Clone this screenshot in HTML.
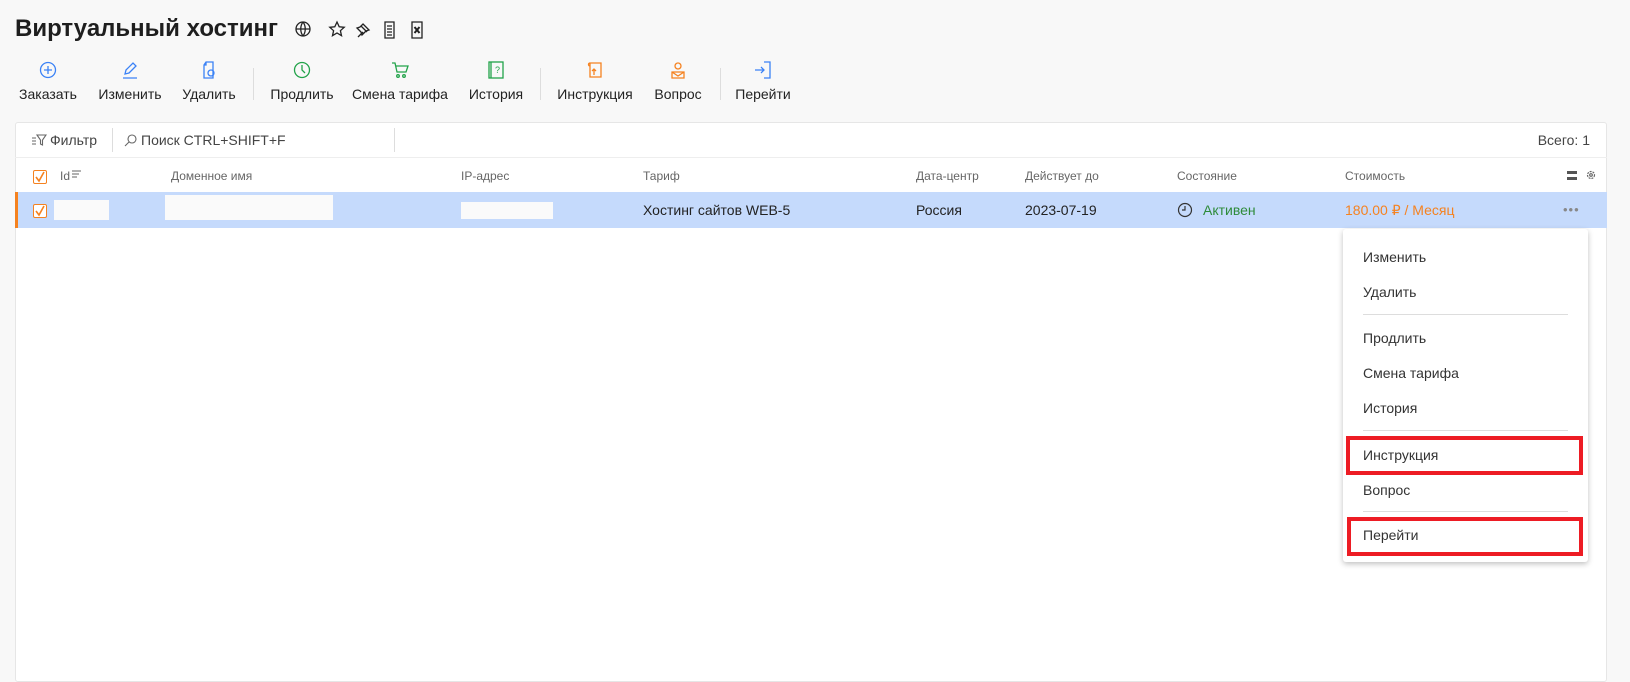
<!DOCTYPE html>
<html><head><meta charset="utf-8"><style>
*{margin:0;padding:0;box-sizing:border-box}
body{width:1630px;height:644px;background:#f8f8f8;font-family:"Liberation Sans",sans-serif;color:#222;position:relative;overflow:hidden}
.a{position:absolute;white-space:nowrap}
.t{font-size:24px;font-weight:bold;left:15px;top:15px;color:#1e1e1e}
.lbl{font-size:14px;top:86px;transform:translateX(-50%);color:#222}
.ic{top:61px;transform:translateX(-50%)}
.sep{width:1px;height:32px;background:#ddd;top:68px}
.panel{left:15px;top:122px;width:1592px;height:560px;background:#fff;border:1px solid #e6e6e6;border-radius:3px}
.hd{font-size:12px;color:#666;top:169px}
.row{left:15px;top:192px;width:1592px;height:36px;background:#c5dafc;border-left:3px solid #f58220}
.cb{width:14px;height:14px;border:1.5px solid #f58220;border-radius:2px;background:#fff}
.wb{background:#fafafa}
.d{font-size:14px;top:202px;color:#222}
.menu{left:1343px;top:229px;width:245px;height:333px;background:#fff;border-radius:3px;box-shadow:0 2px 6px rgba(0,0,0,.25)}
.mi{font-size:14px;left:1363px;color:#333}
.ms{left:1363px;width:205px;height:1px;background:#ddd}
.red{border:4px solid #ed1c24}
</style></head><body>
<div class="a t">Виртуальный хостинг</div>
<svg class="a" style="left:295px;top:20px" width="140" height="20" viewBox="0 0 140 20" fill="none" stroke="#222" stroke-width="1.3">
<circle cx="8" cy="9" r="7"/><path d="M1 9h14M8 2c-3 4-3 10 0 14M8 2c3 4 3 10 0 14"/>
<path d="M42 2l2.2 4.8 5 .5-3.8 3.4 1.1 5-4.5-2.7-4.5 2.7 1.1-5-3.8-3.4 5-.5z"/>
<path d="M63 17l5-5M66 6l6 6M68 4l6 6-3 1-4 4-1-3-4-4 3-1z"/>
<path d="M90 2h9v16h-9zM92 6h5M92 9h5M92 12h5M92 15h5"/>
<path d="M117 2h10v16h-10z"/><path d="M119.5 7l5 6M124.5 7l-5 6" stroke-width="2"/>
</svg>
<svg class="a ic" style="left:48px" width="18" height="18" fill="none" stroke="#3b82f6" stroke-width="1.3"><circle cx="9" cy="9" r="7.5"/><path d="M9 5v8M5 9h8"/></svg>
<svg class="a ic" style="left:130px" width="18" height="18" fill="none" stroke="#3b82f6" stroke-width="1.3"><path d="M4 13l1-4 7-7 3 3-7 7-4 1zM2 17h14"/></svg>
<svg class="a ic" style="left:209px" width="18" height="18" fill="none" stroke="#3b82f6" stroke-width="1.3"><path d="M6 1h7v16H4V4zM6 1v3H4"/><circle cx="11" cy="12" r="3"/></svg>
<svg class="a ic" style="left:302px" width="18" height="18" fill="none" stroke="#22a34a" stroke-width="1.3"><circle cx="9" cy="9" r="7.5"/><path d="M9 4v5l3 3"/></svg>
<svg class="a ic" style="left:400px" width="18" height="18" fill="none" stroke="#22a34a" stroke-width="1.3"><path d="M1 2h3l2 9h9l2-6H5"/><circle cx="7" cy="15" r="1.3"/><circle cx="13" cy="15" r="1.3"/></svg>
<svg class="a ic" style="left:496px" width="18" height="18" fill="none" stroke="#22a34a" stroke-width="1.3"><rect x="2" y="1" width="14" height="16"/><path d="M4 1v16"/><text x="8" y="12" font-size="9" fill="#22a34a" stroke="none" font-family="Liberation Sans">?</text></svg>
<svg class="a ic" style="left:595px" width="18" height="18" fill="none" stroke="#f58220" stroke-width="1.3"><path d="M4 2h11v14H4zM4 2c-2 0-2 3 0 3M8 14V8M6 10l2-2 2 2"/></svg>
<svg class="a ic" style="left:678px" width="18" height="18" fill="none" stroke="#f58220" stroke-width="1.3"><circle cx="9" cy="5" r="3"/><path d="M3 11h12v6H3zM3 11l6 4 6-4"/></svg>
<svg class="a ic" style="left:763px" width="18" height="18" fill="none" stroke="#3b82f6" stroke-width="1.3"><path d="M10 1h6v16h-6M1 9h9M7 6l3 3-3 3"/></svg>
<div class="a lbl" style="left:48px">Заказать</div>
<div class="a lbl" style="left:130px">Изменить</div>
<div class="a lbl" style="left:209px">Удалить</div>
<div class="a lbl" style="left:302px">Продлить</div>
<div class="a lbl" style="left:400px">Смена тарифа</div>
<div class="a lbl" style="left:496px">История</div>
<div class="a lbl" style="left:595px">Инструкция</div>
<div class="a lbl" style="left:678px">Вопрос</div>
<div class="a lbl" style="left:763px">Перейти</div>
<div class="a sep" style="left:253px"></div><div class="a sep" style="left:540px"></div><div class="a sep" style="left:720px"></div>

<div class="a panel"></div>
<div class="a" style="left:15px;top:157px;width:1592px;height:1px;background:#eee"></div>
<svg class="a" style="left:31px;top:133px" width="16" height="14" fill="none" stroke="#666" stroke-width="1.1"><path d="M1 5h4M1 8h4M1 11h4M6 2h9l-3.5 5v5l-2-1V7z"/></svg>
<div class="a" style="left:50px;top:132px;font-size:14px;color:#444">Фильтр</div>
<div class="a" style="left:112px;top:128px;width:1px;height:24px;background:#ddd"></div>
<svg class="a" style="left:124px;top:133px" width="14" height="14" fill="none" stroke="#666" stroke-width="1.1"><circle cx="8" cy="6" r="4"/><path d="M5 9l-4 4"/></svg>
<div class="a" style="left:141px;top:132px;font-size:14px;color:#444">Поиск CTRL+SHIFT+F</div>
<div class="a" style="left:394px;top:128px;width:1px;height:24px;background:#ddd"></div>
<div class="a" style="right:40px;top:132px;font-size:14px;color:#444">Всего: 1</div>

<div class="a cb" style="left:33px;top:170px"></div>
<svg class="a" style="left:33px;top:170px" width="14" height="14" fill="none" stroke="#f58220" stroke-width="1.6"><path d="M3 7l3 4 5-9"/></svg>
<div class="a hd" style="left:60px">Id</div>
<svg class="a" style="left:72px;top:169px" width="10" height="10" stroke="#666" stroke-width="1.1"><path d="M0 2h9M0 5h7M0 8h5"/></svg>
<div class="a hd" style="left:171px">Доменное имя</div>
<div class="a hd" style="left:461px">IP-адрес</div>
<div class="a hd" style="left:643px">Тариф</div>
<div class="a hd" style="left:916px">Дата-центр</div>
<div class="a hd" style="left:1025px">Действует до</div>
<div class="a hd" style="left:1177px">Состояние</div>
<div class="a hd" style="left:1345px">Стоимость</div>
<div class="a" style="left:1567px;top:171px;width:10px;height:3px;background:#555"></div>
<div class="a" style="left:1567px;top:177px;width:10px;height:3px;background:#555"></div>
<svg class="a" style="left:1586px;top:170px" width="10" height="10" fill="none" stroke="#666" stroke-width="1.2"><circle cx="5" cy="5" r="3.5" stroke-dasharray="2 1"/><circle cx="5" cy="5" r="1.3"/></svg>

<div class="a row"></div>
<div class="a cb" style="left:33px;top:204px"></div>
<svg class="a" style="left:33px;top:204px" width="14" height="14" fill="none" stroke="#f58220" stroke-width="1.6"><path d="M3 7l3 4 5-9"/></svg>
<div class="a wb" style="left:54px;top:200px;width:55px;height:20px"></div>
<div class="a wb" style="left:165px;top:195px;width:168px;height:25px"></div>
<div class="a wb" style="left:461px;top:202px;width:92px;height:17px"></div>
<div class="a d" style="left:643px">Хостинг сайтов WEB-5</div>
<div class="a d" style="left:916px">Россия</div>
<div class="a d" style="left:1025px">2023-07-19</div>
<svg class="a" style="left:1177px;top:202px" width="16" height="16" fill="none" stroke="#333" stroke-width="1.2"><circle cx="8" cy="8" r="6.5"/><path d="M8 4v4H5"/></svg>
<div class="a d" style="left:1203px;color:#2e8b3a">Активен</div>
<div class="a d" style="left:1345px;color:#f58220">180.00 ₽ / Месяц</div>
<div class="a" style="left:1563px;top:202px;font-size:13px;color:#888;letter-spacing:1px">•••</div>

<div class="a menu"></div>
<div class="a mi" style="top:249px">Изменить</div>
<div class="a mi" style="top:284px">Удалить</div>
<div class="a ms" style="top:314px"></div>
<div class="a mi" style="top:330px">Продлить</div>
<div class="a mi" style="top:365px">Смена тарифа</div>
<div class="a mi" style="top:400px">История</div>
<div class="a ms" style="top:430px"></div>
<div class="a mi" style="top:447px">Инструкция</div>
<div class="a mi" style="top:482px">Вопрос</div>
<div class="a ms" style="top:511px"></div>
<div class="a mi" style="top:527px">Перейти</div>
<div class="a red" style="left:1346px;top:436px;width:237px;height:39px"></div>
<div class="a red" style="left:1347px;top:517px;width:236px;height:39px"></div>
</body></html>
